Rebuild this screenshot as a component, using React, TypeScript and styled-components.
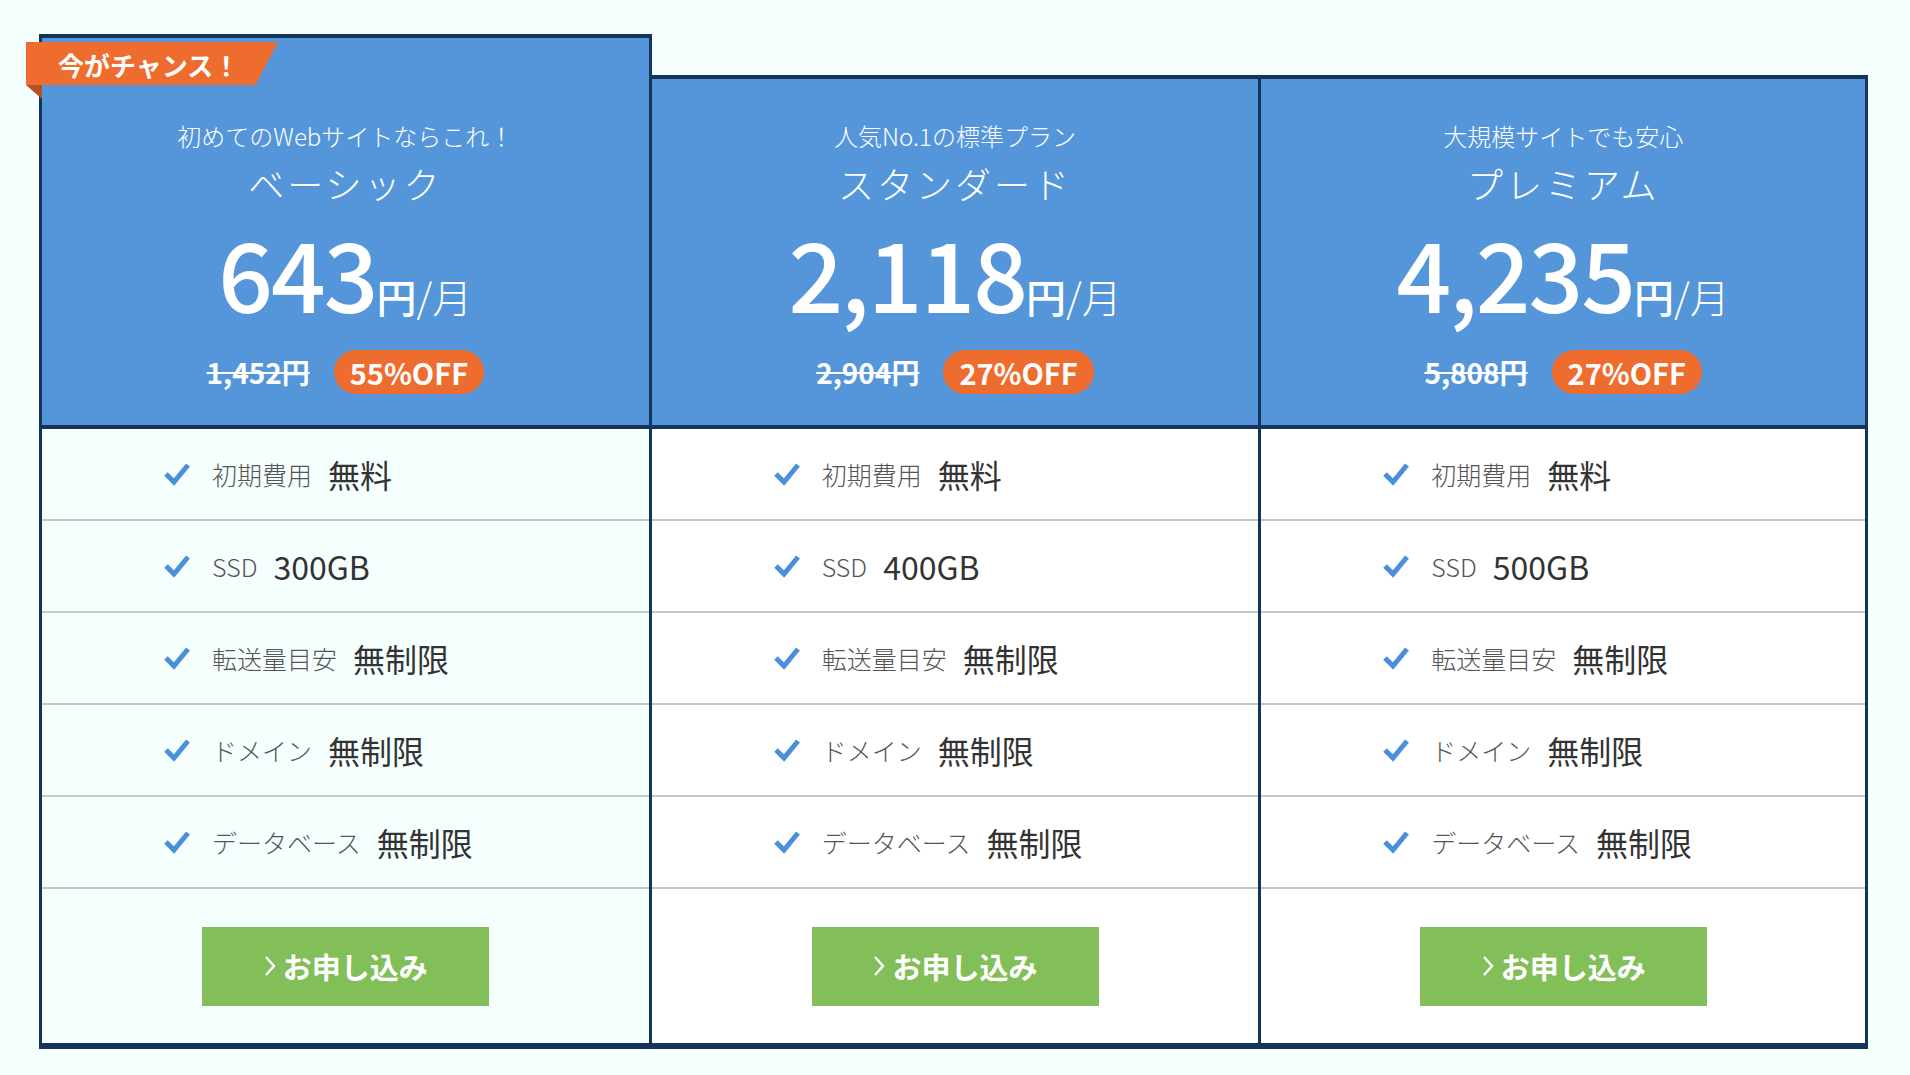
import React from "react";
import styled, { createGlobalStyle } from "styled-components";

const G = createGlobalStyle`
  body { margin:0; background:#f5fffe; font-family:"Noto Sans CJK JP","Noto Sans",sans-serif; }
`;
const Page = styled.div`padding:34px 0 0 39px; width:1910px; height:1075px; box-sizing:border-box;`;
const Row = styled.div`display:flex; align-items:flex-end; width:1829px;`;
const Card = styled.div<{ $hi?: boolean; $last?: boolean }>`
  position:relative; width:610px; box-sizing:border-box; border-left:3px solid #14345a;
  border-right:${p => (p.$last ? "3px solid #14345a" : "0")};
  border-bottom:6px solid #14345a; background:${p => (p.$hi ? "#f5fffe" : "#fff")};
`;
const Head = styled.div<{ $hi?: boolean }>`
  background:#5596da; color:#fff; text-align:center; border-top:4px solid #14345a;
  border-bottom:4px solid #14345a; border-right:${p => (p.$hi ? "3px solid #14345a" : "0")};
  margin-right:${p => (p.$hi ? "-3px" : "0")};
  height:${p => (p.$hi ? 395 : 354)}px; box-sizing:border-box; padding-top:${p => (p.$hi ? 80 : 39)}px;
`;
const Sub = styled.div`font-size:24px; line-height:36px; font-weight:300;`;
const Title = styled.div`font-size:36px; line-height:46px; letter-spacing:3px; margin-top:6px; font-weight:300;`;
const Price = styled.div`display:flex; justify-content:center; align-items:baseline; margin-top:20px; height:92px;`;
const Num = styled.span`font-size:96px; font-weight:500; line-height:92px; letter-spacing:-2px;`;
const Unit = styled.span`font-size:40px; font-weight:500;`;
const Slash = styled.span`font-size:40px; font-weight:300;`;
const OldRow = styled.div`display:flex; justify-content:center; align-items:center; gap:24px; margin-top:32px;`;
const Old = styled.span`font-size:28px; font-weight:700; text-decoration:line-through;`;
const Off = styled.span`background:#ee6c2e; border-radius:22px; font-size:29px; font-weight:700; padding:0 16px; height:44px; line-height:44px;`;
const Item = styled.div`display:flex; align-items:center; height:92px; border-bottom:2px solid #c8c8c8; padding-left:122px; box-sizing:border-box;`;
const Label = styled.span`font-size:25px; color:#555; margin:0 16px 0 22px; font-weight:300;`;
const Val = styled.span`font-size:32px; color:#333; font-weight:400;`;
const Foot = styled.div`height:154px; display:flex; justify-content:center; align-items:center;`;
const Btn = styled.div`width:287px; height:79px; background:#82bf58; color:#fff; font-size:29px; font-weight:700; display:flex; align-items:center; justify-content:center; gap:6px;`;
const Ribbon = styled.div`
  position:absolute; left:-16px; top:8px; height:43px; width:252px; background:#ee6c2e; color:#fff;
  font-size:26px; font-weight:700; line-height:46px; padding-left:32px; box-sizing:border-box;
  clip-path:polygon(0 0,100% 0,91% 100%,0 100%); z-index:2;
`;
const Fold = styled.div`position:absolute; left:-16px; top:51px; width:0; height:0; border-top:14px solid #b8501f; border-left:16px solid transparent; z-index:2;`;

const Check = () => (
  <svg width="26" height="24" viewBox="0 0 26 24"><path d="M2 12 L10 20 L24 3" stroke="#4a8fdb" strokeWidth="5" fill="none" /></svg>
);
const Chev = () => (
  <svg width="14" height="24" viewBox="0 0 14 24"><path d="M3 3 L11 12 L3 21" stroke="#fff" strokeWidth="2.5" fill="none" /></svg>
);

const plans = [
  { sub: "初めてのWebサイトならこれ！", t: "ベーシック", p: "643", o: "1,452円", off: "55%OFF", ssd: "300GB", hi: true },
  { sub: "人気No.1の標準プラン", t: "スタンダード", p: "2,118", o: "2,904円", off: "27%OFF", ssd: "400GB" },
  { sub: "大規模サイトでも安心", t: "プレミアム", p: "4,235", o: "5,808円", off: "27%OFF", ssd: "500GB" },
];

export default function App() {
  return (
    <Page>
      <G />
      <Row>
        {plans.map((pl, i) => {
          const items = [["初期費用", "無料"], ["SSD", pl.ssd], ["転送量目安", "無制限"], ["ドメイン", "無制限"], ["データベース", "無制限"]];
          return (
            <Card key={i} $hi={pl.hi} $last={i === 2}>
              {pl.hi && <><Ribbon>今がチャンス！</Ribbon><Fold /></>}
              <Head $hi={pl.hi}>
                <Sub>{pl.sub}</Sub>
                <Title>{pl.t}</Title>
                <Price><Num>{pl.p}</Num><Unit>円</Unit><Slash>/月</Slash></Price>
                <OldRow><Old>{pl.o}</Old><Off>{pl.off}</Off></OldRow>
              </Head>
              {items.map(([l, v]) => (
                <Item key={l}><Check /><Label>{l}</Label><Val>{v}</Val></Item>
              ))}
              <Foot><Btn><Chev />お申し込み</Btn></Foot>
            </Card>
          );
        })}
      </Row>
    </Page>
  );
}
